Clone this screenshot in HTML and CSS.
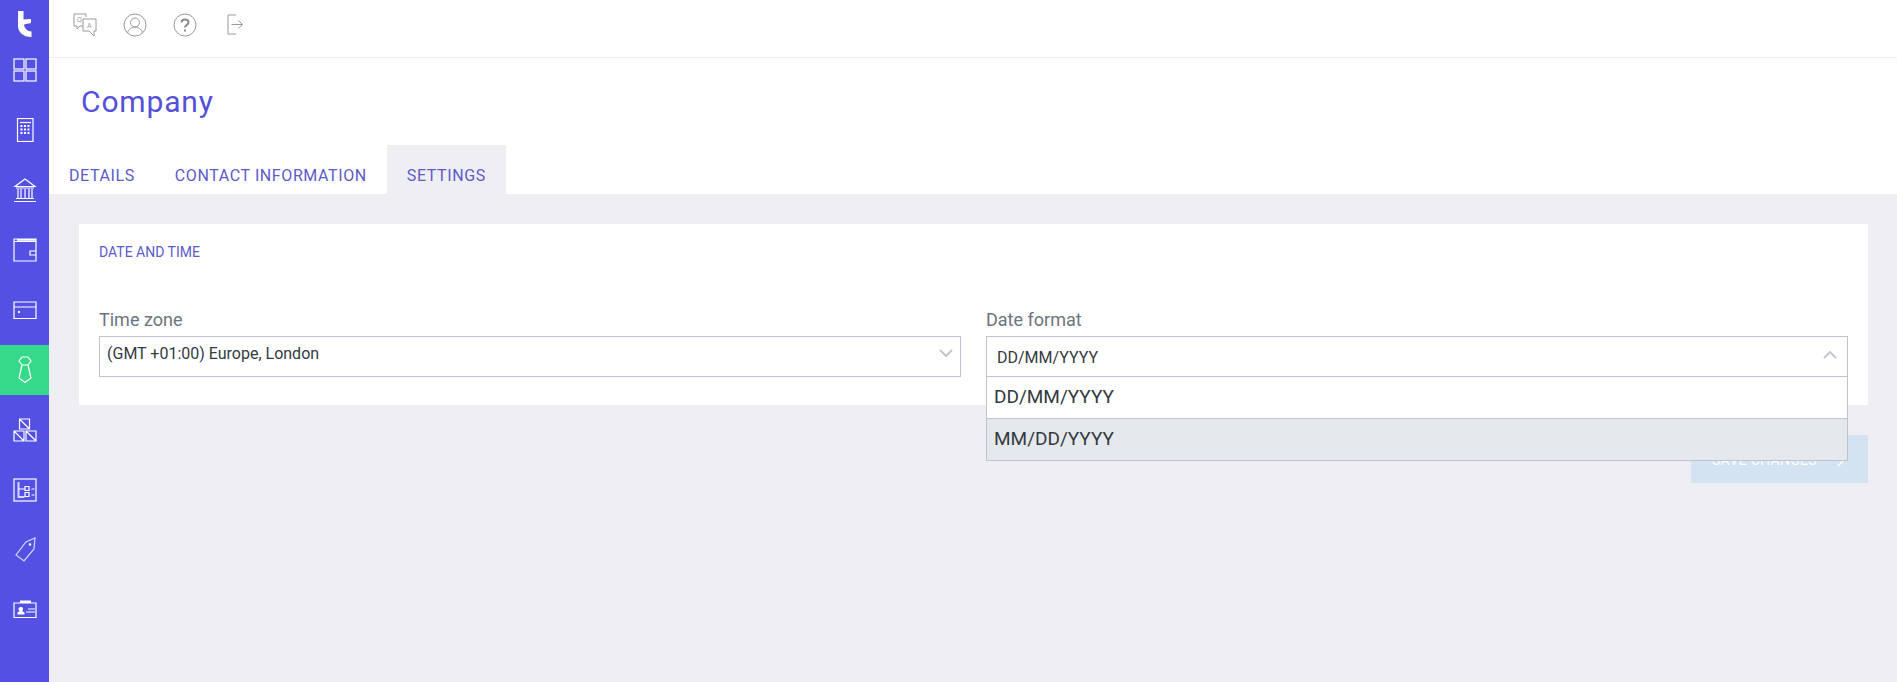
FILE: index.html
```html
<!DOCTYPE html>
<html lang="en">
<head>
    <meta charset="UTF-8">
    <title>Company</title>
    <link rel="stylesheet" href="styles.css">
</head>
<body>

<div class="app">
    <nav class="sidebar">
        <div class="logo">
            <svg width="16" height="27" viewBox="0 0 16 27"><path d="M1 0h5.500v8.500L14 8v4l-7 1.500C7.500 17 9.500 20 14.500 20.500V26C6 26 1 21 1 15z" fill="#fff"/></svg>
        </div>

        <a class="nav-item">
            <svg width="24" height="24" viewBox="0 0 24 24"><rect x="1" y="1" width="10" height="10"/><rect x="13" y="1" width="10" height="10"/><rect x="1" y="13" width="10" height="10"/><rect x="13" y="13" width="10" height="10"/></svg>
        </a>
        <a class="nav-item">
            <svg width="24" height="24" viewBox="0 0 24 24"><rect x="4.500" y="0.500" width="15.500" height="23"/><path d="M7 4.500h11"/><path class="solid" d="M7.500 7h2v2h-2zM11 7h2v2h-2zM14.500 7h2v2h-2zM7.500 10.500h2v2h-2zM11 10.500h2v2h-2zM14.500 10.500h2v2h-2zM7.500 14h2v2h-2zM11 14h2v2h-2zM14.500 14h2v2h-2z"/></svg>
        </a>
        <a class="nav-item">
            <svg width="24" height="24" viewBox="0 0 24 24"><path d="M12 1L2 8.500h20zM3 10h18M5 11v9M8 11v9M12 11v9M16 11v9M19 11v9M3 20.500h18M1 23.500h22"/></svg>
        </a>
        <a class="nav-item">
            <svg width="24" height="24" viewBox="0 0 24 24"><path d="M1 1h22v22H1zM1 3.500h22M4 2.200h19M23 13h-6v4h6"/></svg>
        </a>
        <a class="nav-item">
            <svg width="24" height="24" viewBox="0 0 24 24"><path d="M1 4h22v16.500H1zM1 9h22"/><path class="solid" d="M5 13h2v2H5z"/></svg>
        </a>
        <a class="nav-item active">
            <svg width="14" height="28" viewBox="0 0 14 28"><path d="M4 1h6l3 4-3 4H4L1 5zM4 9L1 22l6 4.500L13 22 10 9"/></svg>
        </a>
        <a class="nav-item">
            <svg width="24" height="24" viewBox="0 0 24 24"><path d="M6.500 1h10v10h-10zM6.500 1l10 10M1 13h10v10H1zM1 13l10 10M13 13h10v10H13zM13 13l10 10"/></svg>
        </a>
        <a class="nav-item">
            <svg width="24" height="24" viewBox="0 0 24 24"><rect x="1" y="1" width="22" height="22"/><path class="dim" d="M5.500 4v15h6" stroke-width="2"/><path d="M5.500 11h6M12 8.500h4v4h-4zM12 14.500h4v4h-4zM18.500 11h3M18.500 17h3"/></svg>
        </a>
        <a class="nav-item">
            <svg width="24" height="26" viewBox="0 0 24 26"><path class="dim" d="M22 1l-1 11-10 12-8-6L13 5z"/><circle class="solid" cx="17" cy="7.500" r="1.300"/></svg>
        </a>
        <a class="nav-item">
            <svg width="24" height="20" viewBox="0 0 24 20"><path d="M1 3h22v14.500H1z"/><path class="solid" d="M7 0.500h11v2.500H7zM7.500 7a2 2 0 0 1 2.500 2c0 1-.5 1.500-1 2l2.500 1.500V14.500H4.500V12.500L6.500 11C6 10.500 5.500 10 5.500 9a2 2 0 0 1 2-2z"/><path d="M15 9h7M13 12h9"/></svg>
        </a>
    </nav>

    <div class="main">
        <header class="topbar">
            <svg class="top-icon" width="24" height="24" viewBox="0 0 24 24">
                <path d="M1 1h12v3M10 13H7l-3 3v-3H1V1M10 6h13v12h-2v5l-5-5h-6z"/>
                <text class="qa-letter" x="4" y="9">Q</text>
                <text class="qa-letter" x="14" y="15">A</text>
            </svg>
            <svg class="top-icon" width="24" height="24" viewBox="0 0 24 24"><circle cx="12" cy="12" r="11"/><circle cx="12" cy="9.500" r="4.500"/><path d="M4.500 20c1-4 4-6 7.500-6s6.500 2 7.500 6"/></svg>
            <svg class="top-icon" width="24" height="24" viewBox="0 0 24 24"><circle cx="12" cy="12" r="11"/><path class="mark" d="M8.500 9.500C8.500 7.500 10 6.500 12 6.500s3.500 1 3.500 3c0 2.500-3.500 2.500-3.500 5M12 16.500v2"/></svg>
            <svg class="top-icon" width="24" height="24" viewBox="0 0 24 24"><path d="M13 2H5v19h8M8.500 11.500H19M15.500 7.500l4 4-4 4"/></svg>
        </header>

        <div class="page-head">
            <h1 class="page-title">Company</h1>
            <div class="tabs">
                <a class="tab">Details</a>
                <a class="tab">Contact information</a>
                <a class="tab selected">Settings</a>
            </div>
        </div>

        <div class="content">
            <section class="card">
                <h2 class="card-title">Date and time</h2>
                <div class="form-row">
                    <div class="field">
                        <label class="field-label">Time zone</label>
                        <div class="select">
                            <span class="select-value tz-value">(GMT +01:00) Europe, London</span>
                            <svg class="chevron tz-chevron" width="14" height="8" viewBox="0 0 14 8"><path d="M1 1l6 6 6-6"/></svg>
                        </div>
                    </div>
                    <div class="field">
                        <label class="field-label">Date format</label>
                        <div class="select open">
                            <span class="select-value">DD/MM/YYYY</span>
                            <svg class="chevron" width="14" height="8" viewBox="0 0 14 8"><path d="M1 7l6-6 6 6"/></svg>
                            <ul class="dropdown">
                                <li class="option">DD/MM/YYYY</li>
                                <li class="option highlighted">MM/DD/YYYY</li>
                            </ul>
                        </div>
                    </div>
                </div>
            </section>

            <div class="actions">
                <button class="save-btn">
                    <span>Save changes</span>
                    <svg width="8" height="14" viewBox="0 0 8 14"><path d="M1 1l6 6-6 6"/></svg>
                </button>
            </div>
        </div>
    </div>
</div>

</body>
</html>
```

FILE: styles.css
```css
* {
    box-sizing: border-box;
}

html, body {
    height: 100%;
}

body {
    margin: 0;
    font-family: Roboto, Arial, sans-serif;
    background-color: #eeeef3;
    overflow: hidden;
}

.app {
    display: flex;
    height: 100%;
}

/* Left navigation */
.sidebar {
    width: 49px;
    flex-shrink: 0;
    background-color: #5450e3;
    display: flex;
    flex-direction: column;
}

.logo {
    height: 45px;
    display: flex;
    justify-content: center;
    padding-top: 11px;
}

.nav-item {
    height: 50px;
    margin-bottom: 10px;
    display: flex;
    justify-content: center;
    align-items: center;
}

.nav-item.active {
    background-color: #36d98a;
}

.nav-item svg {
    fill: none;
    stroke: #fff;
    stroke-width: 1.2;
}

.nav-item .solid {
    fill: #fff;
    stroke: none;
}

.nav-item .dim {
    stroke: #d6d5f8;
}

/* Top bar */
.main {
    flex: 1;
    min-width: 0;
    display: flex;
    flex-direction: column;
}

.topbar {
    height: 58px;
    background-color: #fff;
    border-bottom: 1px solid #f0f0f3;
    display: flex;
    align-items: flex-start;
    gap: 26px;
    padding: 13px 0 0 24px;
    flex-shrink: 0;
}

.top-icon {
    fill: none;
    stroke: #9a9a9a;
    stroke-width: 1;
}

.top-icon .mark {
    stroke: #8a8a8a;
    stroke-width: 2;
}

.top-icon .qa-letter {
    font-family: Roboto, Arial, sans-serif;
    font-size: 7px;
    fill: #9a9a9a;
    stroke: none;
}

.page-head {
    background-color: #fff;
    height: 136px;
    flex-shrink: 0;
    display: flex;
    flex-direction: column;
    justify-content: space-between;
}

.page-title {
    margin: 26px 0 0 32px;
    font-size: 30px;
    font-weight: 400;
    line-height: 36px;
    letter-spacing: 0.85px;
    color: #5450d8;
}

.tabs {
    display: flex;
}

.tab {
    height: 49px;
    padding: 21px 20px 0;
    font-size: 16px;
    line-height: 20px;
    letter-spacing: 0.6px;
    text-transform: uppercase;
    color: #5d5ac9;
}

.tab.selected {
    background-color: #eeeef3;
}

/* Settings card */
.content {
    padding: 30px 29px 0 30px;
}

.card {
    height: 181px;
    background-color: #fff;
    padding: 20px 20px 0;
}

.card-title {
    margin: 0;
    font-size: 14px;
    font-weight: 400;
    line-height: 16px;
    text-transform: uppercase;
    color: #5d5ac9;
}

.form-row {
    display: flex;
    gap: 25px;
    margin-top: 47px;
}

.field {
    flex: 1;
}

.field-label {
    display: block;
    font-size: 18px;
    line-height: 26px;
    color: #6c757d;
    margin-bottom: 3px;
}

.select {
    position: relative;
    height: 41px;
    border: 1px solid #c0c2d0;
    background-color: #fff;
    display: flex;
    justify-content: space-between;
    align-items: center;
    padding: 0 10px 0 10px;
}

.select.open {
    border-bottom: none;
}

.select-value {
    font-size: 16px;
    color: #343a40;
}

.tz-value {
    margin: -6px 0 0 -3px;
}

.chevron {
    fill: none;
    stroke: #c4c6cf;
    stroke-width: 2;
    margin-top: -4px;
}

.tz-chevron {
    margin: -7px -3px 0 0;
}

.dropdown {
    position: absolute;
    top: 39px;
    left: -1px;
    right: -1px;
    margin: 0;
    padding: 0;
    list-style: none;
    border: 1px solid #c0c2d0;
    background-color: #fff;
}

.option {
    height: 41px;
    line-height: 40px;
    padding-left: 7px;
    font-size: 19px;
    color: #343a40;
}

.option.highlighted {
    height: 42px;
    background-color: #e5e9ee;
    border-top: 1px solid #c0c2d0;
}

/* Save button, mostly hidden behind the open dropdown */
.actions {
    display: flex;
    justify-content: flex-end;
    margin-top: 30px;
}

.save-btn {
    width: 177px;
    height: 48px;
    border: none;
    background-color: #d3e3f1;
    color: #fff;
    font-family: inherit;
    font-size: 14px;
    letter-spacing: 0.3px;
    text-transform: uppercase;
    display: flex;
    justify-content: space-between;
    align-items: center;
    padding: 1px 23px 0 21px;
}

.save-btn svg {
    fill: none;
    stroke: #fff;
    stroke-width: 1.500;
}
```
